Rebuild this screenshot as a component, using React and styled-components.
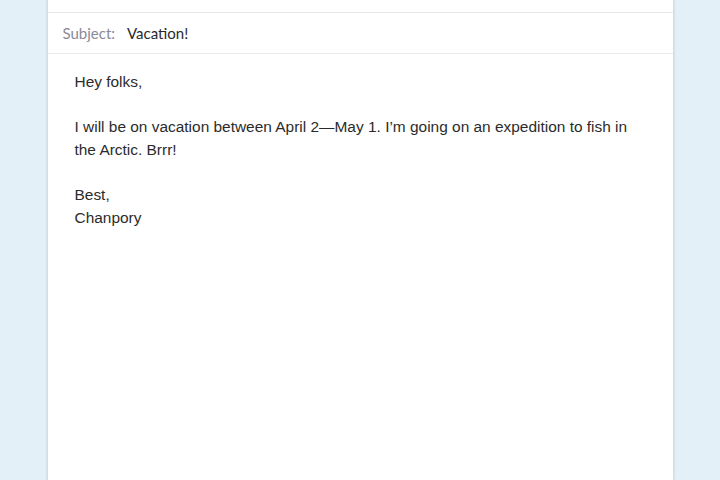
import styled, { createGlobalStyle } from "styled-components";

const GlobalStyle = createGlobalStyle`
  html, body {
    margin: 0;
    padding: 0;
    height: 100%;
    background: #e4f0f7;
  }
  #root {
    height: 100%;
  }
`;

const Page = styled.div`
  height: 480px;
  display: flex;
  justify-content: center;
  overflow: hidden;
  background: #e4f0f7;
`;

const Card = styled.div`
  width: 625px;
  background: #fff;
  border-left: 1px solid #d3dde3;
  border-right: 1px solid #d3dde3;
  box-shadow: 0 0 2px rgba(120, 140, 150, 0.35);
  display: flex;
  flex-direction: column;
`;

const Row = styled.div`
  height: ${(p) => p.$h}px;
  border-bottom: 1px solid #e9e9e9;
  display: flex;
  align-items: center;
  padding: 0 15px;
  box-sizing: border-box;
  font-family: Lato, "Open Sans", sans-serif;
  font-size: 15px;
`;

const Label = styled.span`
  color: #8b8a99;
  margin-right: 12px;
`;

const Value = styled.span`
  color: #2a2a2a;
`;

const Body = styled.div`
  padding: 17px 27px;
  font-family: "Liberation Sans", Arial, sans-serif;
  font-size: 15.45px;
  line-height: 22.7px;
  color: #2b2b2b;

  p {
    margin: 0 0 22.7px 0;
  }
`;

export default function App() {
  return (
    <>
      <GlobalStyle />
      <Page>
        <Card>
          <Row $h={13} />
          <Row $h={41}>
            <Label>Subject:</Label>
            <Value>Vacation!</Value>
          </Row>
          <Body>
            <p>Hey folks,</p>
            <p>
              I will be on vacation between April 2—May 1. I’m going on an
              expedition to fish in the Arctic. Brrr!
            </p>
            <p>
              Best,
              <br />
              Chanpory
            </p>
          </Body>
        </Card>
      </Page>
    </>
  );
}
